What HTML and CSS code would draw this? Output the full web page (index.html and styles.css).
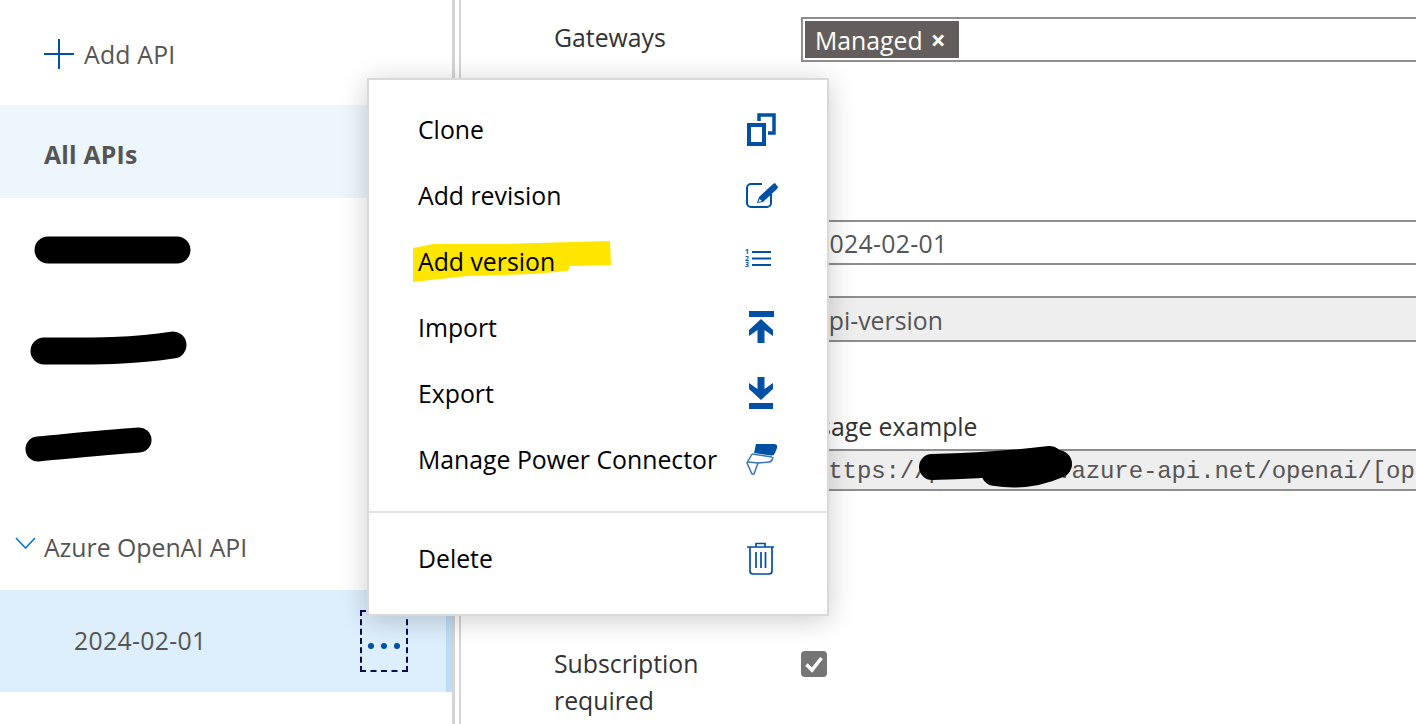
FILE: index.html
```html
<!DOCTYPE html>
<html lang="en">
<head>
  <meta charset="UTF-8">
  <title>APIs</title>
  <link rel="stylesheet" href="styles.css">
</head>
<body>
  <div class="layout">
    <aside class="sidebar">
      <div class="add-api">
        <svg class="plus" width="30" height="30" viewBox="0 0 30 30"><path d="M0 15H30M15 0V30"/></svg>
        <span>Add API</span>
      </div>
      <div class="all-apis">All APIs</div>
      <div class="api-row"></div>
      <div class="api-row"></div>
      <div class="api-row"></div>
      <div class="api-group">
        <svg class="chevron" width="21" height="12" viewBox="0 0 21 12"><path d="M1 1L10.5 11L20 1"/></svg>
        <span>Azure OpenAI API</span>
      </div>
      <div class="version-row">
        <span class="date">2024-02-01</span>
        <button class="more" type="button"><i></i><i></i><i></i></button>
      </div>
    </aside>

    <div class="splitter"></div>

    <main class="content">
      <div class="form-row">
        <label class="gateways-label">Gateways</label>
        <div class="field tags"><span class="tag">Managed <b>×</b></span></div>
      </div>
      <div class="form-row version-name">
        <label></label>
        <div class="field date">2024-02-01</div>
      </div>
      <div class="form-row version-query">
        <label></label>
        <div class="field readonly">api-version</div>
      </div>
      <div class="form-row usage">
        <label></label>
        <div>
          <div class="field-label">Usage example</div>
          <div class="field readonly mono">https://pxxxxxxxx.azure-api.net/openai/[ope</div>
        </div>
      </div>
      <div class="form-row subscription">
        <label>Subscription required</label>
        <span class="checkbox">
          <svg width="22" height="22" viewBox="0 0 22 22"><path d="M3.500 11.500L9 17L18.500 5"/></svg>
        </span>
      </div>
    </main>
  </div>

  <!-- black marker over private names -->
  <svg class="redactions" width="1416" height="724" viewBox="0 0 1416 724">
    <path d="M48 250H177" stroke-width="27"/>
    <path d="M44 351C80 351 130 352 173 345" stroke-width="27"/>
    <path d="M38 449C70 446 110 442 139 440" stroke-width="25"/>
    <path d="M932 467C970 466 1010 464 1050 459" stroke-width="26"/>
    <path d="M995 472C1020 476 1040 472 1058 464" stroke-width="28"/>
  </svg>

  <div class="menu">
    <svg class="marker" width="200" height="42" viewBox="0 0 200 42"><path d="M0 7L20 3L87 3L197 0L198 24L157 25L155 30L120 33L54 35L0 41Z"/></svg>
    <div class="menu-item">
      <span>Clone</span>
      <svg class="icon" width="34" height="34" viewBox="0 0 34 34">
        <rect class="line" x="5" y="12" width="15" height="19" stroke-width="4"/>
        <path class="line" d="M15 8V2H30V20H24" stroke-width="3.5"/>
      </svg>
    </div>
    <div class="menu-item">
      <span>Add revision</span>
      <svg class="icon" width="34" height="34" viewBox="0 0 34 34">
        <path class="line" d="M18 5H7a4 4 0 0 0-4 4V24a4 4 0 0 0 4 4H23a4 4 0 0 0 4-4V14" stroke-width="2"/>
        <path class="fill" d="M13 24L15 18L29 5L31 4L34 8L33 10L19 23Z"/>
        <path class="white" d="M15.500 20L18 22L14.500 23Z"/>
      </svg>
    </div>
    <div class="menu-item">
      <span>Add version</span>
      <svg class="icon" width="34" height="34" viewBox="0 0 34 34">
        <path class="line" d="M8 7H27M8 13.500H27M8 20H27" stroke-width="2"/>
        <text class="num" x="1" y="9">1</text>
        <text class="num" x="1" y="15.500">2</text>
        <text class="num" x="1" y="22">3</text>
      </svg>
    </div>
    <div class="menu-item">
      <span>Import</span>
      <svg class="icon" width="34" height="34" viewBox="0 0 34 34">
        <path class="fill" d="M5 0H30V6H5Z"/>
        <path class="fill" d="M17 8L29 19V25L20.500 19V32H13.500V19L5 25V19Z"/>
      </svg>
    </div>
    <div class="menu-item">
      <span>Export</span>
      <svg class="icon" width="34" height="34" viewBox="0 0 34 34">
        <path class="fill" d="M13.500 0H20.500V12L29 6V12L17 23L5 12V6L13.500 12Z"/>
        <path class="fill" d="M5 26H29V32H5Z"/>
      </svg>
    </div>
    <div class="menu-item">
      <span>Manage Power Connector</span>
      <svg class="icon" width="34" height="34" viewBox="0 0 34 34">
        <path class="fill" d="M12 1H30Q34 1 33 5L31 10Q30 13 27 12.500L10 10Z"/>
        <path class="soft" d="M8 11L3 20L8 31H10L14 20L25 19Q28 19 29 14"/>
        <path class="soft" d="M8 11L28 14M4 19L14 20"/>
      </svg>
    </div>
    <hr class="menu-divider">
    <div class="menu-item">
      <span>Delete</span>
      <svg class="icon" width="34" height="34" viewBox="0 0 34 34">
        <path class="line" d="M3 5H30M12 5V1.500H21V5M6 5V29a3 3 0 0 0 3 3H25a3 3 0 0 0 3-3V5M12 10V26M17 10V26M21.500 10V26" stroke-width="1.700"/>
      </svg>
    </div>
  </div>
</body>
</html>
```

FILE: styles.css
```css
html, body {
  margin: 0;
  height: 100%;
  overflow: hidden;
}

body {
  font-family: 'Open Sans', 'Liberation Sans', sans-serif;
  font-size: 24.8px;
  background: #fff;
  color: #333;
  position: relative;
}

.layout {
  display: flex;
  height: 724px;
}

.date {
  letter-spacing: 0.3px;
}

/* left column */
.sidebar {
  width: 452px;
  flex: none;
  color: #555;
}

.add-api {
  height: 105px;
  display: flex;
  align-items: center;
  gap: 10px;
  padding: 2px 0 0 44px;
  box-sizing: border-box;
}

.add-api span {
  padding-top: 1px;
  letter-spacing: 0.2px;
}

.plus path {
  fill: none;
  stroke: #0050a4;
  stroke-width: 2;
}

.all-apis {
  height: 93px;
  box-sizing: border-box;
  padding: 5px 0 0 44px;
  display: flex;
  align-items: center;
  background: #edf5fd;
  font-weight: 700;
  letter-spacing: 0.2px;
}

.api-row {
  height: 97px;
}

.api-group {
  height: 101px;
  box-sizing: border-box;
  padding: 14px 0 0 15px;
  display: flex;
  align-items: center;
  gap: 8px;
}

.chevron {
  margin-bottom: 8px;
}

.chevron path {
  fill: none;
  stroke: #0078d4;
  stroke-width: 1.6;
}

.version-row {
  height: 102px;
  box-sizing: border-box;
  padding-left: 74px;
  display: flex;
  align-items: center;
  justify-content: space-between;
  background: #ddeefc;
  border-right: 6px solid #bbdcf8;
}

.version-row span {
  padding-bottom: 3px;
}

.more {
  width: 48px;
  height: 62px;
  margin-right: 38px;
  padding: 10px 0 0;
  display: flex;
  align-items: center;
  justify-content: center;
  gap: 7px;
  background: none;
  border: 2px dashed #0b0b55;
}

.more i {
  width: 6px;
  height: 6px;
  border-radius: 50%;
  background: #0050a4;
}

.splitter {
  width: 9px;
  flex: none;
  box-sizing: border-box;
  border-left: 3px solid #d4d4d4;
  border-right: 2px solid #d4d4d4;
}

/* right column */
.content {
  flex: 1;
  padding: 17px 0 0 93px;
  min-width: 0;
}

.form-row {
  display: grid;
  grid-template-columns: 247px 800px;
  align-items: center;
}

.gateways-label {
  padding-bottom: 6px;
}

.version-name {
  margin-top: 158px;
}

.version-query {
  margin-top: 31px;
}

.version-query .field {
  height: 46px;
  padding-top: 1px;
}

.usage {
  margin-top: 68px;
  align-items: start;
}

.subscription {
  margin-top: 154px;
  align-items: start;
}

.subscription label {
  display: block;
  line-height: 37px;
  padding-right: 40px;
}

.field {
  height: 45px;
  box-sizing: border-box;
  padding: 0 12px;
  display: flex;
  align-items: center;
  white-space: nowrap;
  color: #555;
  border: solid #8e8e8e;
  border-width: 2px 0 2px 2px;
}

.tags {
  padding: 2px;
}

.tag {
  height: 37px;
  padding: 0 13px 0 10px;
  display: flex;
  align-items: center;
  gap: 8px;
  color: #fff;
  background: #635e5c;
}

.tag b {
  font-size: 26px;
}

.readonly {
  background: #eee;
}

.mono {
  height: 42px;
  padding: 3px 0 0 11px;
  font-family: 'Liberation Mono', monospace;
  font-size: 24px;
  letter-spacing: -0.1px;
}

.field-label {
  height: 32px;
  margin-bottom: 7px;
  line-height: 32px;
}

.checkbox {
  width: 26px;
  height: 26px;
  margin-top: 6px;
  display: flex;
  align-items: center;
  justify-content: center;
  border-radius: 4px;
  background: #757575;
}

.checkbox path {
  fill: none;
  stroke: #fff;
  stroke-width: 3.5;
}

.redactions {
  position: absolute;
  left: 0;
  top: 0;
}

.redactions path {
  fill: none;
  stroke: #000;
  stroke-linecap: round;
  stroke-linejoin: round;
}

/* context menu */
.menu {
  position: absolute;
  left: 367px;
  top: 78px;
  width: 462px;
  box-sizing: border-box;
  padding: 17px 0 22px;
  background: #fff;
  border: 2px solid #d9d9d9;
  box-shadow: 0 4px 26px rgba(0, 0, 0, 0.2);
  color: #000;
}

.menu-item {
  height: 66px;
  padding: 0 49px 0 49px;
  display: flex;
  align-items: center;
  justify-content: space-between;
  position: relative;
}

.menu-item span {
  padding-bottom: 3px;
}

.marker {
  position: absolute;
  left: 44px;
  top: 161px;
}

.marker path {
  fill: #ffe600;
}

.menu-divider {
  height: 2px;
  margin: 18px 0 13px;
  border: none;
  background: #e3e3e3;
}

.icon .line {
  fill: none;
  stroke: #0050a4;
}

.icon .fill {
  fill: #0050a4;
}

.icon .white {
  fill: #fff;
}

.icon .soft {
  fill: none;
  stroke: #3a76b4;
  stroke-width: 1.500;
}

.icon .num {
  font-size: 7px;
  font-weight: 700;
  fill: #0050a4;
}
```
